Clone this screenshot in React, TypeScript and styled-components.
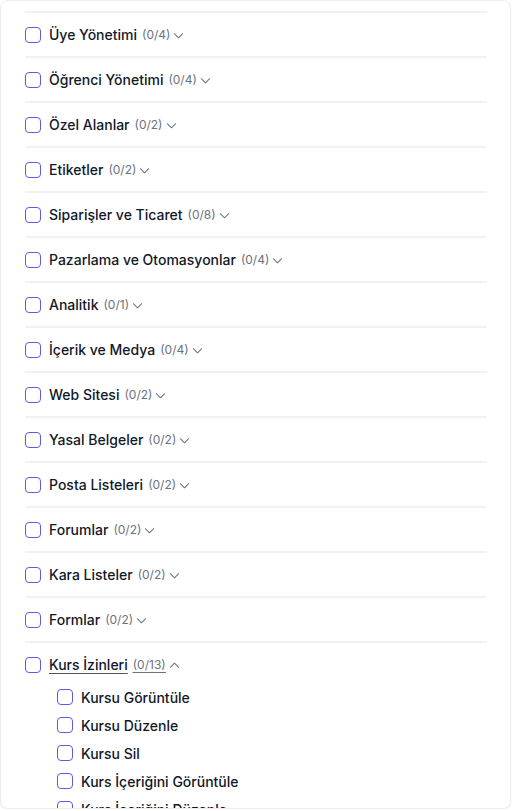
import React from "react";
import styled, { createGlobalStyle } from "styled-components";

const Global = createGlobalStyle`
  html, body { margin: 0; padding: 0; background: #ffffff; }
  body { font-family: Inter, "Noto Sans", sans-serif; -webkit-font-smoothing: antialiased; }
  * { box-sizing: border-box; }
`;

const Card = styled.div`
  width: 511px;
  height: 809px;
  background: #ffffff;
  border: 1px solid #eceef2;
  border-radius: 8px;
  box-shadow: 0 1px 2px rgba(0, 0, 0, 0.06);
  overflow: hidden;
  padding: 10px 23px 0 24px;
`;

const List = styled.ul`
  list-style: none;
  margin: 0;
  padding: 0;
`;

const Item = styled.li`
  border-top: 2px solid #eef1f5;
  padding: 12px 0 11px;
`;

const HeaderRow = styled.div`
  display: flex;
  align-items: center;
  height: 20px;
  gap: 8px;
`;

const Box = styled.span`
  flex: none;
  width: 16px;
  height: 16px;
  border: 1.5px solid #5b5ce6;
  border-radius: 4px;
  background: #fff;
`;

const Title = styled.span<{ $active?: boolean }>`
  display: flex;
  align-items: center;
  font-size: 14px;
  line-height: 20px;
  font-weight: 500;
  color: #111827;
  text-decoration: ${(p) => (p.$active ? "underline" : "none")};
  text-underline-offset: 3px;
  text-decoration-color: #4b5563;
`;

const Name = styled.span``;

const Count = styled.span<{ $active?: boolean }>`
  margin-left: 5px;
  font-size: 12px;
  font-weight: 400;
  color: #6b7280;
  text-decoration: ${(p) => (p.$active ? "underline" : "none")};
  text-underline-offset: 3px;
`;

const Chevron = styled.svg`
  margin-left: 3px;
  flex: none;
`;

const Children = styled.ul`
  list-style: none;
  margin: 12px 0 0;
  padding: 0 0 0 32px;
  display: flex;
  flex-direction: column;
  gap: 8px;
`;

const ChildRow = styled.li`
  display: flex;
  align-items: center;
  gap: 8px;
  height: 20px;
  font-size: 14px;
  font-weight: 500;
  color: #111827;
`;

const groups: { name: string; count: string; open?: boolean; children?: string[] }[] = [
  { name: "Üye Yönetimi", count: "(0/4)" },
  { name: "Öğrenci Yönetimi", count: "(0/4)" },
  { name: "Özel Alanlar", count: "(0/2)" },
  { name: "Etiketler", count: "(0/2)" },
  { name: "Siparişler ve Ticaret", count: "(0/8)" },
  { name: "Pazarlama ve Otomasyonlar", count: "(0/4)" },
  { name: "Analitik", count: "(0/1)" },
  { name: "İçerik ve Medya", count: "(0/4)" },
  { name: "Web Sitesi", count: "(0/2)" },
  { name: "Yasal Belgeler", count: "(0/2)" },
  { name: "Posta Listeleri", count: "(0/2)" },
  { name: "Forumlar", count: "(0/2)" },
  { name: "Kara Listeler", count: "(0/2)" },
  { name: "Formlar", count: "(0/2)" },
  {
    name: "Kurs İzinleri",
    count: "(0/13)",
    open: true,
    children: [
      "Kursu Görüntüle",
      "Kursu Düzenle",
      "Kursu Sil",
      "Kurs İçeriğini Görüntüle",
      "Kurs İçeriğini Düzenle",
      "Kurs İçeriğini Sil",
    ],
  },
];

const ChevronIcon = ({ up }: { up?: boolean }) => (
  <Chevron width="11" height="11" viewBox="0 0 12 12" fill="none">
    <path
      d={up ? "M1.5 8 L6 3.5 L10.5 8" : "M1.5 4 L6 8.5 L10.5 4"}
      stroke="#6b7280"
      strokeWidth="1.1"
      strokeLinecap="round"
      strokeLinejoin="round"
    />
  </Chevron>
);

export default function App() {
  return (
    <>
      <Global />
      <Card>
        <List>
          {groups.map((g) => (
            <Item key={g.name}>
              <HeaderRow>
                <Box />
                <Title $active={g.open}>
                  <Name>{g.name}</Name>
                  <Count $active={g.open}>{g.count}</Count>
                  <ChevronIcon up={g.open} />
                </Title>
              </HeaderRow>
              {g.open && g.children && (
                <Children>
                  {g.children.map((c) => (
                    <ChildRow key={c}>
                      <Box />
                      {c}
                    </ChildRow>
                  ))}
                </Children>
              )}
            </Item>
          ))}
        </List>
      </Card>
    </>
  );
}
